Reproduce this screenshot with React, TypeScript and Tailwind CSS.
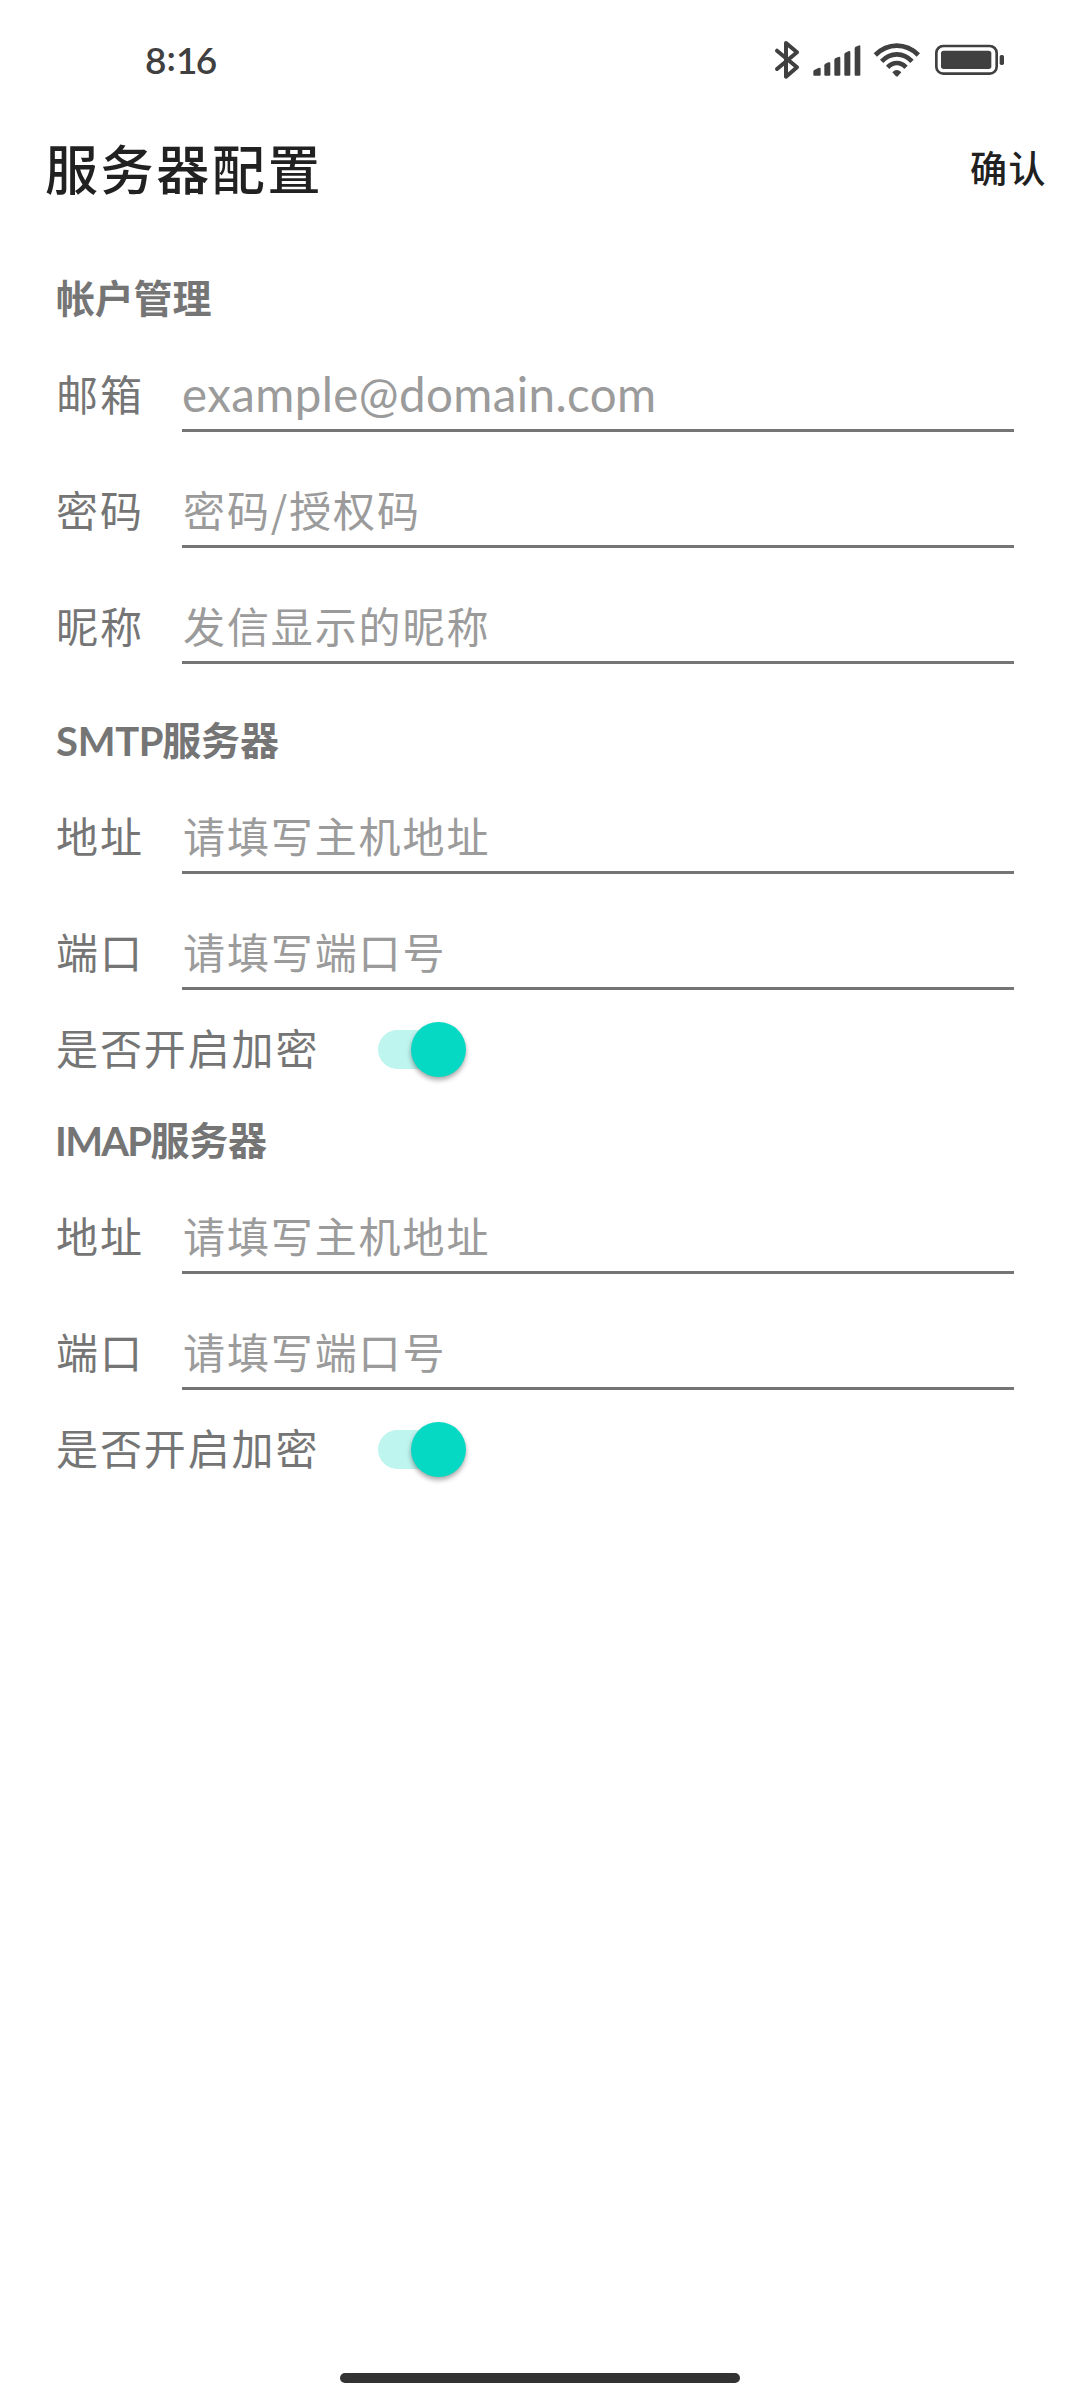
import React from "react";

function StatusBar() {
  return (
    <div className="flex h-[120px] items-start justify-between pl-[145px] pr-[75px] pt-[40px] text-[#404040]">
      <div className="flex font-['Lato',sans-serif] text-[37px] font-semibold leading-[40px]">
        <span>8</span>
        <span className="-mt-[3px]">:</span>
        <span className="tracking-[-1.5px]">16</span>
      </div>
      <div className="flex">
        <svg className="h-[40px] w-[26px]" viewBox="42 30 78 120" fill="none" stroke="currentColor" strokeWidth="12" strokeLinecap="round" strokeLinejoin="round">
          <path d="M51 62 L111 112 L78 140 V39 L111 67 L51 117" />
        </svg>
        <svg className="ml-[13px] h-[40px] w-[48px]" viewBox="159 30 144 120" fill="currentColor">
          <path d="M160 125 Q160 122 163 120 L175 114 Q182 112 182 117 V134 Q182 137 179 137 H163 Q160 137 160 134Z" />
          <path d="M193 106 Q193 103 196 101 L205 97 Q211 95 211 100 V134 Q211 137 208 137 H196 Q193 137 193 134Z" />
          <path d="M223 90 Q223 87 226 85 L235 81 Q241 79 241 84 V134 Q241 137 238 137 H226 Q223 137 223 134Z" />
          <path d="M253 73 Q253 70 256 68 L265 64 Q271 61 271 67 V134 Q271 137 268 137 H256 Q253 137 253 134Z" />
          <path d="M284 55 Q284 52 287 50 L295 47 Q301 44 301 50 V134 Q301 137 298 137 H287 Q284 137 284 134Z" />
        </svg>
        <svg className="ml-[12px] h-[40px] w-[48px]" viewBox="339 30 144 120" fill="none" stroke="currentColor" strokeWidth="14">
          <path d="M346 75 Q374 47 410.500 47 Q447 47 475 75" />
          <path d="M365 94 Q385 73 410.500 73 Q436 73 456 94" />
          <path d="M383 112 Q395 99 410.500 99 Q426 99 438 112" />
          <path d="M397 127 Q410.500 113 424 127 L414 138 Q410.500 141 407 138Z" fill="currentColor" stroke="none" />
        </svg>
        <svg className="ml-[13px] h-[40px] w-[71px]" viewBox="522 30 213 120" fill="currentColor">
          <rect x="529" y="48" width="181" height="83" rx="21" fill="none" stroke="currentColor" strokeWidth="8" />
          <rect x="543" y="62" width="151" height="55" rx="8" />
          <rect x="719" y="75" width="13" height="30" rx="5" />
        </svg>
      </div>
    </div>
  );
}

function Field({ label, hint, latin }: { label: string; hint: string; latin?: boolean }) {
  return (
    <label className="flex h-[116px] items-end">
      <span className="w-[126px] shrink-0 pb-[11px] text-[42px] leading-[56px] tracking-[1.9px] text-[#757575]">{label}</span>
      <span
        className={
          latin
            ? "h-[68px] w-[832px] whitespace-nowrap border-b-[3px] border-[#757575] font-['Lato',sans-serif] text-[47.5px] leading-[60px] tracking-[0.4px] text-[#9b9b9b]"
            : "h-[68px] w-[832px] whitespace-nowrap border-b-[3px] border-[#757575] pl-[1px] text-[42px] leading-[58px] tracking-[1.9px] text-[#9b9b9b]"
        }
      >
        {hint}
      </span>
    </label>
  );
}

function SectionTitle({ latin, text }: { latin?: string; text: string }) {
  return (
    <h2 className="flex h-[34px] items-center whitespace-nowrap text-[39px] font-bold leading-[34px] text-[#757575]">
      {latin === "IMAP" && <span className="-ml-[1px] font-['Lato',sans-serif] text-[40px] tracking-[-1.7px]">{latin}</span>}
      {latin === "SMTP" && <span className="-mr-[1px] font-['Lato',sans-serif] text-[40px] tracking-[-0.3px]">{latin}</span>}
      <span className="-mt-[6px] tracking-[-0.2px]">{text}</span>
    </h2>
  );
}

function EncryptionSwitch() {
  return (
    <div className="mt-[31px] flex h-[56px] items-center">
      <span className="-mt-[5px] w-[322px] whitespace-nowrap text-[42px] leading-[56px] tracking-[1.9px] text-[#757575]">是否开启加密</span>
      <div className="flex h-[39px] w-[80px] items-center rounded-full bg-[#bff5ef] pl-[32.5px]">
        <div className="h-[55px] w-[55px] shrink-0 rounded-full bg-[#05d8c3] shadow-[0_3px_5px_rgba(0,0,0,0.35)]" />
      </div>
    </div>
  );
}

function ServerSection({ name }: { name: string }) {
  return (
    <section>
      <SectionTitle latin={name} text="服务器" />
      <Field label="地址" hint="请填写主机地址" />
      <Field label="端口" hint="请填写端口号" />
      <EncryptionSwitch />
    </section>
  );
}

export default function App() {
  return (
    <div className="flex h-[2400px] w-[1080px] flex-col overflow-hidden bg-white font-['Noto_Sans_CJK_SC',sans-serif]">
      <StatusBar />
      <header className="flex h-[98px] items-center justify-between pb-[5px] pl-[45px] pr-[33px] text-[#212121]">
        <h1 className="text-[53px] font-medium leading-[60px] tracking-[2.6px]">服务器配置</h1>
        <button className="text-[37px] font-medium leading-[60px] tracking-[1.5px]">确认</button>
      </header>
      <main className="flex-1 pl-[56px] pt-[64px]">
        <section>
          <SectionTitle text="帐户管理" />
          <Field label="邮箱" hint="example@domain.com" latin />
          <Field label="密码" hint="密码/授权码" />
          <Field label="昵称" hint="发信显示的昵称" />
        </section>
        <div className="mt-[60px] flex flex-col gap-[47px]">
          <ServerSection name="SMTP" />
          <ServerSection name="IMAP" />
        </div>
      </main>
      <footer className="flex justify-center pb-[17px]">
        <div className="h-[10px] w-[400px] rounded-full bg-[#333333]" />
      </footer>
    </div>
  );
}
